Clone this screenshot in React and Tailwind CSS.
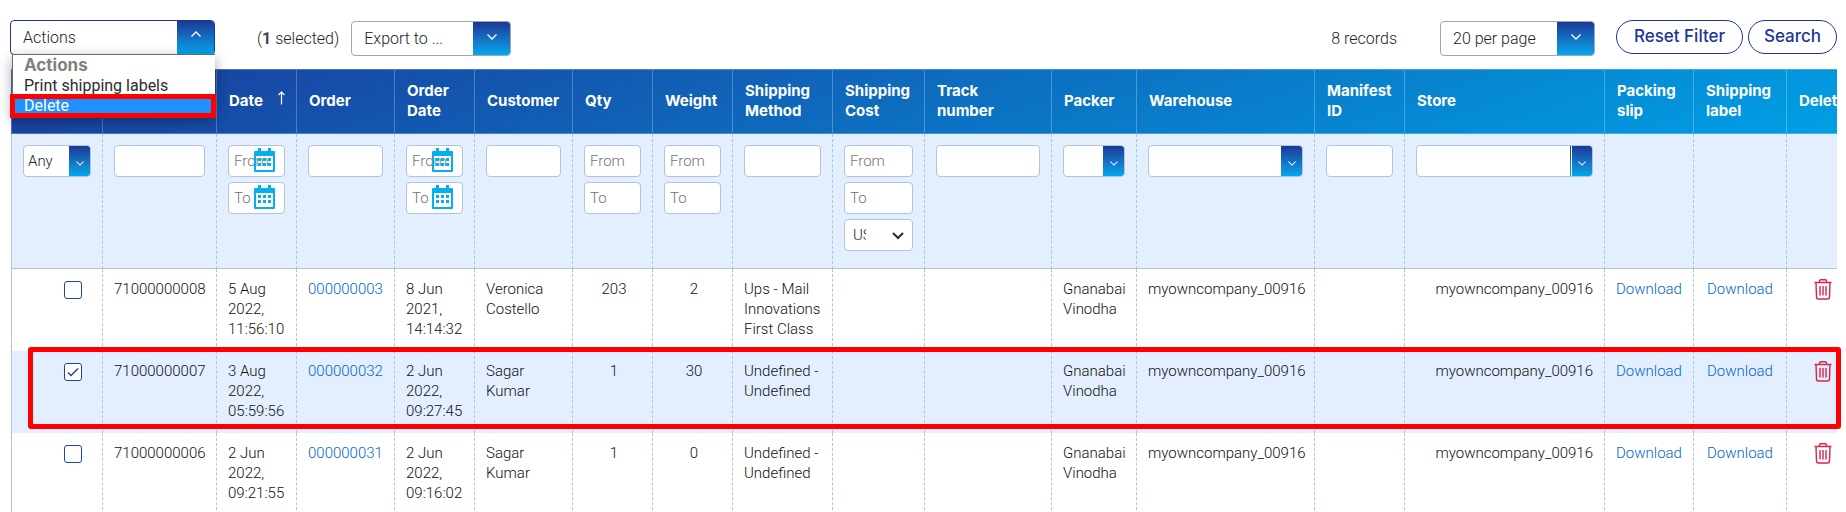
import React from 'react';
import clsx from 'clsx';

const rows = [
  { id: '71000000008', date: ['5 Aug', '2022,', '11:56:10'], order: '000000003', orderDate: ['8 Jun', '2021,', '14:14:32'], customer: 'Veronica Costello', qty: 203, weight: 2, method: 'Ups - Mail Innovations First Class' },
  { id: '71000000007', date: ['3 Aug', '2022,', '05:59:56'], order: '000000032', orderDate: ['2 Jun', '2022,', '09:27:45'], customer: 'Sagar Kumar', qty: 1, weight: 30, method: 'Undefined - Undefined', selected: true },
  { id: '71000000006', date: ['2 Jun', '2022,', '09:21:55'], order: '000000031', orderDate: ['2 Jun', '2022,', '09:16:02'], customer: 'Sagar Kumar', qty: 1, weight: 0, method: 'Undefined - Undefined' },
];

const Chevron = ({ up, className }) => (
  <svg viewBox="0 0 10 6" className={className} fill="none" stroke="currentColor" strokeWidth="1.3">
    <path d={up ? 'M0.5 5.5 L5 1 L9.5 5.5' : 'M0.5 0.5 L5 5 L9.5 0.5'} />
  </svg>
);

const ToolbarSelect = ({ label, value, width, open }) => (
  <div className={clsx('relative h-[35px] overflow-hidden rounded-[4px] border bg-white', width, open ? 'border-[#1a3796]' : 'border-[#a3a5a9]')}>
    <select aria-label={label} className="h-full w-full appearance-none bg-transparent pt-px pr-10 pl-3 text-base font-light text-[#222] outline-none">
      <option>{value}</option>
    </select>
    <span className={clsx('pointer-events-none absolute inset-y-0 right-0 flex w-[37px] justify-center bg-linear-to-b from-[#1a3796] to-[#00a8ee] text-white', open ? 'pt-[10px]' : 'pt-3')}>
      <Chevron up={open} className="h-[6px] w-[10px]" />
    </span>
  </div>
);

const FilterSelect = ({ label, value = '', split }) => (
  <div className="relative h-8 w-full overflow-hidden rounded-[4px] border border-[#b0c4de] bg-white">
    <select aria-label={label} className="h-full w-full appearance-none bg-transparent pr-5 pl-1 text-[15px] font-light text-[#222] outline-none">
      <option>{value}</option>
    </select>
    <span className="pointer-events-none absolute inset-y-0 right-0 flex w-[21px] items-center justify-center bg-linear-to-b from-[#1a3796] to-[#00a8ee] pt-1 text-white">
      {split && <i className="absolute inset-y-0 left-0 w-px bg-white" />}
      <Chevron className="h-[5px] w-2" />
    </span>
    {split && <i className="pointer-events-none absolute inset-y-0 right-[21px] w-px bg-linear-to-b from-[#1a3796] to-[#00a8ee]" />}
  </div>
);

const Field = ({ label, placeholder }) => (
  <input aria-label={label} placeholder={placeholder} className="block h-8 w-full rounded-[4px] border border-[#b0c4de] bg-white px-[5px] text-[15px] font-light text-[#222] outline-none placeholder:text-[#757575]" />
);

const Calendar = () => (
  <svg viewBox="0 0 21 24" className="pointer-events-none absolute top-[3px] right-[10px] h-6 w-[21px]" fill="#04aeef">
    <path fillRule="evenodd" d="M4 0h3v3h7V0h3v3h3a1 1 0 0 1 1 1v19a1 1 0 0 1-1 1H1a1 1 0 0 1-1-1V4a1 1 0 0 1 1-1h3zM2 8v14h17V8z" />
    <path d="M4 10h3v3H4zM9 10h3v3H9zM14 10h3v3h-3zM4 15h3v3H4zM9 15h3v3H9zM14 15h3v3h-3z" />
  </svg>
);

const DateField = (props) => (
  <div className="relative">
    <Field {...props} />
    <Calendar />
  </div>
);

const Range = ({ name, date }) => {
  const Control = date ? DateField : Field;
  return (
    <div className="flex flex-col gap-[5px]">
      <Control label={`${name} from`} placeholder="From" />
      <Control label={`${name} to`} placeholder="To" />
    </div>
  );
};

const Trash = () => (
  <svg viewBox="0 0 18 21" className="h-[21px] w-[18px]" fill="none" stroke="#dc2448" strokeWidth="1.4">
    <path d="M0.5 3.5h17M5.5 3.5V2a1.2 1.2 0 0 1 1.2-1.2h4.6A1.2 1.2 0 0 1 12.5 2v1.5M2 3.5l0.5 14.5a2 2 0 0 0 2 2h9a2 2 0 0 0 2-2L16 3.5M6 7v9.5M9 7v9.5M12 7v9.5" />
  </svg>
);

const columns = [
  { key: 'select', width: 'w-[91px]', filter: <FilterSelect label="Selection" value="Any" /> },
  { key: 'id', width: 'w-[114px]', filter: <Field label="Shipment" /> },
  { key: 'date', name: 'Date', sorted: true, width: 'w-20', filter: <Range name="Date" date /> },
  { key: 'order', name: 'Order', width: 'w-[98px]', filter: <Field label="Order" /> },
  { key: 'orderDate', name: 'Order Date', width: 'w-20', filter: <Range name="Order date" date /> },
  { key: 'customer', name: 'Customer', width: 'w-[98px]', filter: <Field label="Customer" /> },
  { key: 'qty', name: 'Qty', width: 'w-20', filter: <Range name="Qty" /> },
  { key: 'weight', name: 'Weight', width: 'w-20', filter: <Range name="Weight" /> },
  { key: 'method', name: 'Shipping Method', width: 'w-[100px]', filter: <Field label="Shipping method" /> },
  {
    key: 'cost',
    name: 'Shipping Cost',
    width: 'w-[92px]',
    filter: (
      <div className="flex flex-col gap-[5px]">
        <Range name="Shipping cost" />
        <div className="relative h-8 rounded-[4px] border border-[#b0c4de] bg-white">
          <select aria-label="Currency" className="h-full w-full appearance-none bg-transparent pr-[46px] pl-2 text-[15px] font-light text-[#222] outline-none">
            <option>USD</option>
          </select>
          <svg viewBox="0 0 12 8" className="pointer-events-none absolute top-3 right-2 h-2 w-3" fill="none" stroke="#2b2d33" strokeWidth="2">
            <path d="M1 1l5 5 5-5" />
          </svg>
        </div>
      </div>
    ),
  },
  { key: 'track', name: 'Track number', narrow: true, width: 'w-[127px]', filter: <Field label="Track number" /> },
  { key: 'packer', name: 'Packer', width: 'w-[85px]', filter: <FilterSelect label="Packer" /> },
  { key: 'warehouse', name: 'Warehouse', width: 'w-[178px]', filter: <FilterSelect label="Warehouse" /> },
  { key: 'manifest', name: 'Manifest ID', width: 'w-[90px]', filter: <Field label="Manifest ID" /> },
  { key: 'store', name: 'Store', width: 'w-[200px]', filter: <FilterSelect label="Store" split /> },
  { key: 'slip', name: 'Packing slip', width: 'w-[89px]' },
  { key: 'label', name: 'Shipping label', width: 'w-[93px]' },
  { key: 'delete', name: 'Delete', width: 'w-[75px]' },
];

const Cell = ({ className, children }) => (
  <td className={clsx('border-l border-dashed border-[#b0c4de] pt-[10px] pr-2 pb-3 pl-[11px] align-top first:border-solid', className)}>{children}</td>
);

const Stamp = ({ lines }) => lines.map((line) => <div key={line}>{line}</div>);

const Toolbar = () => (
  <div className="flex h-[69px] items-start pt-5 pr-[9px] pl-[10px]">
    <div className="relative">
      <ToolbarSelect label="Actions" value="Actions" width="w-[205px]" open />
      <ul className="absolute top-[34px] left-[2px] z-20 w-[203px] border-t border-l border-[#6b6b6b] bg-white pb-px text-base leading-5 text-[#2b2b2b] shadow-[0_4px_12px_rgba(0,0,0,0.35)]">
        <li className="pl-[11px] font-['Inter'] text-[17px] font-bold text-[#868079]">Actions</li>
        <li className="pt-px pl-[11px]">Print shipping labels</li>
        <li className="relative bg-[#1e90ff] pl-[11px] text-white">
          Delete
          <span className="absolute -top-[2px] right-[-1px] -bottom-[2px] left-[-3px] border-[5px] border-[#ff0000]" />
        </li>
      </ul>
    </div>
    <span className="ml-[42px] text-base leading-[38px] font-light text-[#222]">
      (<b className="font-bold text-[#41444b]">1</b> selected)
    </span>
    <div className="mt-px ml-3">
      <ToolbarSelect label="Export to" value="Export to ..." width="w-[160px]" />
    </div>
    <span className="ml-auto text-base leading-[38px] font-light text-[#222]">8 records</span>
    <div className="mt-px ml-[43px]">
      <ToolbarSelect label="Records per page" value="20 per page" width="w-[155px]" />
    </div>
    <button className="ml-[21px] h-[34px] w-[127px] rounded-full border border-[#1a3796] font-['Inter'] text-[17px] font-medium text-[#1a3796]">Reset Filter</button>
    <button className="ml-[5px] h-[34px] w-[89px] rounded-full border border-[#1a3796] font-['Inter'] text-[17px] font-medium text-[#1a3796]">Search</button>
  </div>
);

const ShipmentTable = () => (
  <table className="w-full min-w-[1850px] table-fixed border-separate border-spacing-0 text-[15px] leading-5 font-light">
    <thead>
      <tr className="h-[65px] bg-[linear-gradient(160deg,#1a3c9b,#00a0e5)]">
        {columns.map((col) => (
          <th key={col.key} className={clsx('border-y border-l border-white/25 pr-1 pb-px pl-3 text-left font-[\'Inter\'] text-[15px] leading-5 font-bold text-white', col.width)}>
            <div className="flex justify-between pr-[7px]">
              <span className={clsx(col.narrow && 'w-20')}>{col.name}</span>
              {col.sorted && (
                <svg viewBox="0 0 7 14" className="h-[14px] w-[7px]" fill="none" stroke="currentColor" strokeWidth="1.2">
                  <path d="M3.5 13.5V1M0.5 4l3-3 3 3" />
                </svg>
              )}
            </div>
          </th>
        ))}
      </tr>
    </thead>
    <tbody>
      <tr className="h-[135px] bg-[#e3efff]">
        {columns.map((col) => (
          <td key={col.key} className="border-b border-l border-dashed border-[#b0c4de] px-[11px] pt-[11px] align-top [border-bottom-style:solid] first:border-solid">
            {col.filter}
          </td>
        ))}
      </tr>
      {rows.map((row) => (
        <tr key={row.id} className={clsx('h-[82px]', row.selected && 'bg-[#e3efff]')}>
          <Cell className="text-right">
            <label className="relative mt-[2px] mr-3 inline-block h-[18px] w-[18px]">
              <input type="checkbox" aria-label={`Select ${row.id}`} defaultChecked={row.selected} className="peer block h-[18px] w-[18px] appearance-none rounded-[3px] border border-[#1a44a0] bg-white" />
              <svg viewBox="0 0 18 18" className="pointer-events-none absolute inset-0 hidden peer-checked:block" fill="none" stroke="#1a44a0" strokeWidth="1.4">
                <path d="M4 9.5l3 3 7-7" />
              </svg>
            </label>
          </Cell>
          <Cell>{row.id}</Cell>
          <Cell><Stamp lines={row.date} /></Cell>
          <Cell><a href="#order" className="text-[#0068cc]">{row.order}</a></Cell>
          <Cell><Stamp lines={row.orderDate} /></Cell>
          <Cell>{row.customer}</Cell>
          <Cell className="text-center">{row.qty}</Cell>
          <Cell className="text-center">{row.weight}</Cell>
          <Cell>{row.method}</Cell>
          <Cell />
          <Cell />
          <Cell>Gnanabai Vinodha</Cell>
          <Cell>myowncompany_00916</Cell>
          <Cell />
          <Cell className="text-right"><span className="mr-[3px]">myowncompany_00916</span></Cell>
          <Cell><a href="#slip" className="text-[#0068cc]">Download</a></Cell>
          <Cell className="pl-[13px]"><a href="#label" className="text-[#0068cc]">Download</a></Cell>
          <Cell>
            <button aria-label={`Delete ${row.id}`} className="ml-4 block"><Trash /></button>
          </Cell>
        </tr>
      ))}
    </tbody>
  </table>
);

const App = () => {
  return (
    <div className="max-h-screen overflow-hidden bg-white font-['Roboto',sans-serif] text-[#111]">
      <Toolbar />
      <div className="relative">
        <div className="mr-[9px] ml-[11px] overflow-hidden">
          <ShipmentTable />
        </div>
        <span className="pointer-events-none absolute top-[278px] right-[5px] left-7 h-[82px] rounded-[3px] border-[5px] border-[#ff0000]" />
      </div>
    </div>
  );
};

export default App;
